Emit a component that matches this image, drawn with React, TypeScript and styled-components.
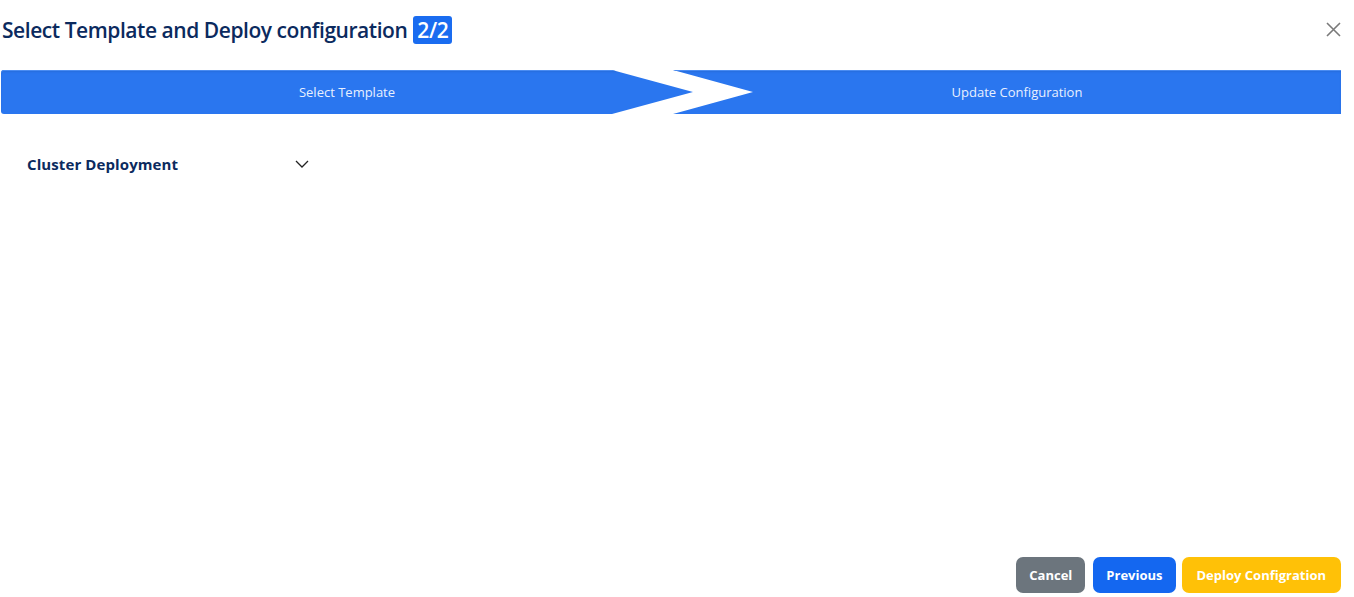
import React from "react";
import styled, {createGlobalStyle} from "styled-components";

const GlobalStyle = createGlobalStyle`
    html, body {
        margin: 0;
        padding: 0;
        background: #ffffff;
        font-family: "Open Sans", "Noto Sans", sans-serif;
    }
`;

const SModal = styled.div`
    width: 1354px;
    height: 597px;
    display: flex;
    flex-direction: column;
    box-sizing: border-box;
    padding: 0 13px 4px 1px;
`;

const SHeader = styled.div`
    display: flex;
    align-items: center;
    justify-content: space-between;
    height: 60px;
    padding-left: 1px;
`;

const STitle = styled.h1`
    margin: 0;
    font-size: 21px;
    font-weight: 600;
    color: #0b2a5e;
    display: flex;
    align-items: center;
    gap: 6px;
    letter-spacing: -0.45px;
`;

const SBadge = styled.span`
    background: #1a6cf0;
    color: #ffffff;
    border-radius: 3px;
    padding: 0 4px;
    height: 28px;
    line-height: 28px;
    font-size: 21px;
    font-weight: 600;
`;

const SClose = styled.button`
    border: none;
    background: none;
    padding: 0;
    width: 18px;
    height: 18px;
    margin-right: -2px;
    cursor: pointer;
    display: flex;
`;

const SStepper = styled.div`
    display: flex;
    height: 44px;
    margin-top: 10px;
`;

interface SStepProps {
    $first: boolean,
}

const SStep = styled.div<SStepProps>`
    flex: ${(props) => props.$first ? "0 0 692px" : "1"};
    margin-left: ${(props) => props.$first ? "0" : "-20px"};
    padding-left: ${(props) => props.$first ? "0" : "20px"};
    background: #2a76ef;
    box-shadow: inset 0 1px 0 #4a8cf2, inset 0 2px 2px rgba(0, 0, 0, 0.08);
    border-radius: ${(props) => props.$first ? "3px 0 0 3px" : "0"};
    clip-path: ${(props) => props.$first
        ? "polygon(0 0, calc(100% - 81px) 0, 100% 50%, calc(100% - 81px) 100%, 0 100%)"
        : "polygon(0 0, 100% 0, 100% 100%, 0 100%, 80px 50%)"};
    display: flex;
    align-items: center;
    justify-content: center;
    color: #e8f0ff;
    font-size: 13px;
`;

const SSection = styled.div`
    display: flex;
    align-items: center;
    width: 282px;
    justify-content: space-between;
    margin: 40px 0 0 26px;
`;

const SSectionTitle = styled.span`
    font-size: 15px;
    font-weight: 700;
    color: #0b2a5e;
    letter-spacing: 0.1px;
`;

const SFooter = styled.div`
    margin-top: auto;
    display: flex;
    justify-content: flex-end;
    gap: 8px;
`;

interface SButtonProps {
    $bg: string,
}

const SButton = styled.button<SButtonProps>`
    background: ${(props) => props.$bg};
    color: #ffffff;
    border: none;
    border-radius: 7px;
    height: 36px;
    padding: 0 13px;
    font-family: "Open Sans", "Noto Sans", sans-serif;
    font-size: 13px;
    font-weight: 700;
    cursor: pointer;
`;

const SWideButton = styled(SButton)`
    padding: 0 15px;
    margin-left: -2px;
`;

const App = () => {
    return (
        <SModal>
            <GlobalStyle/>
            <SHeader>
                <STitle>
                    Select Template and Deploy configuration
                    <SBadge>2/2</SBadge>
                </STitle>
                <SClose aria-label="close">
                    <svg width="18" height="18" viewBox="0 0 18 18">
                        <path d="M2 2 L15 15 M15 2 L2 15" stroke="#7a7a7a" strokeWidth="1.6"/>
                    </svg>
                </SClose>
            </SHeader>
            <SStepper>
                <SStep $first={true}>Select Template</SStep>
                <SStep $first={false}>Update Configuration</SStep>
            </SStepper>
            <SSection>
                <SSectionTitle>Cluster Deployment</SSectionTitle>
                <svg width="14" height="8" viewBox="0 0 14 8">
                    <path d="M1 1 L7 7 L13 1" fill="none" stroke="#222" strokeWidth="1.3"/>
                </svg>
            </SSection>
            <SFooter>
                <SButton $bg="#6c757d">Cancel</SButton>
                <SButton $bg="#1467f0">Previous</SButton>
                <SWideButton $bg="#ffc107">Deploy Configration</SWideButton>
            </SFooter>
        </SModal>
    );
}

export default App
